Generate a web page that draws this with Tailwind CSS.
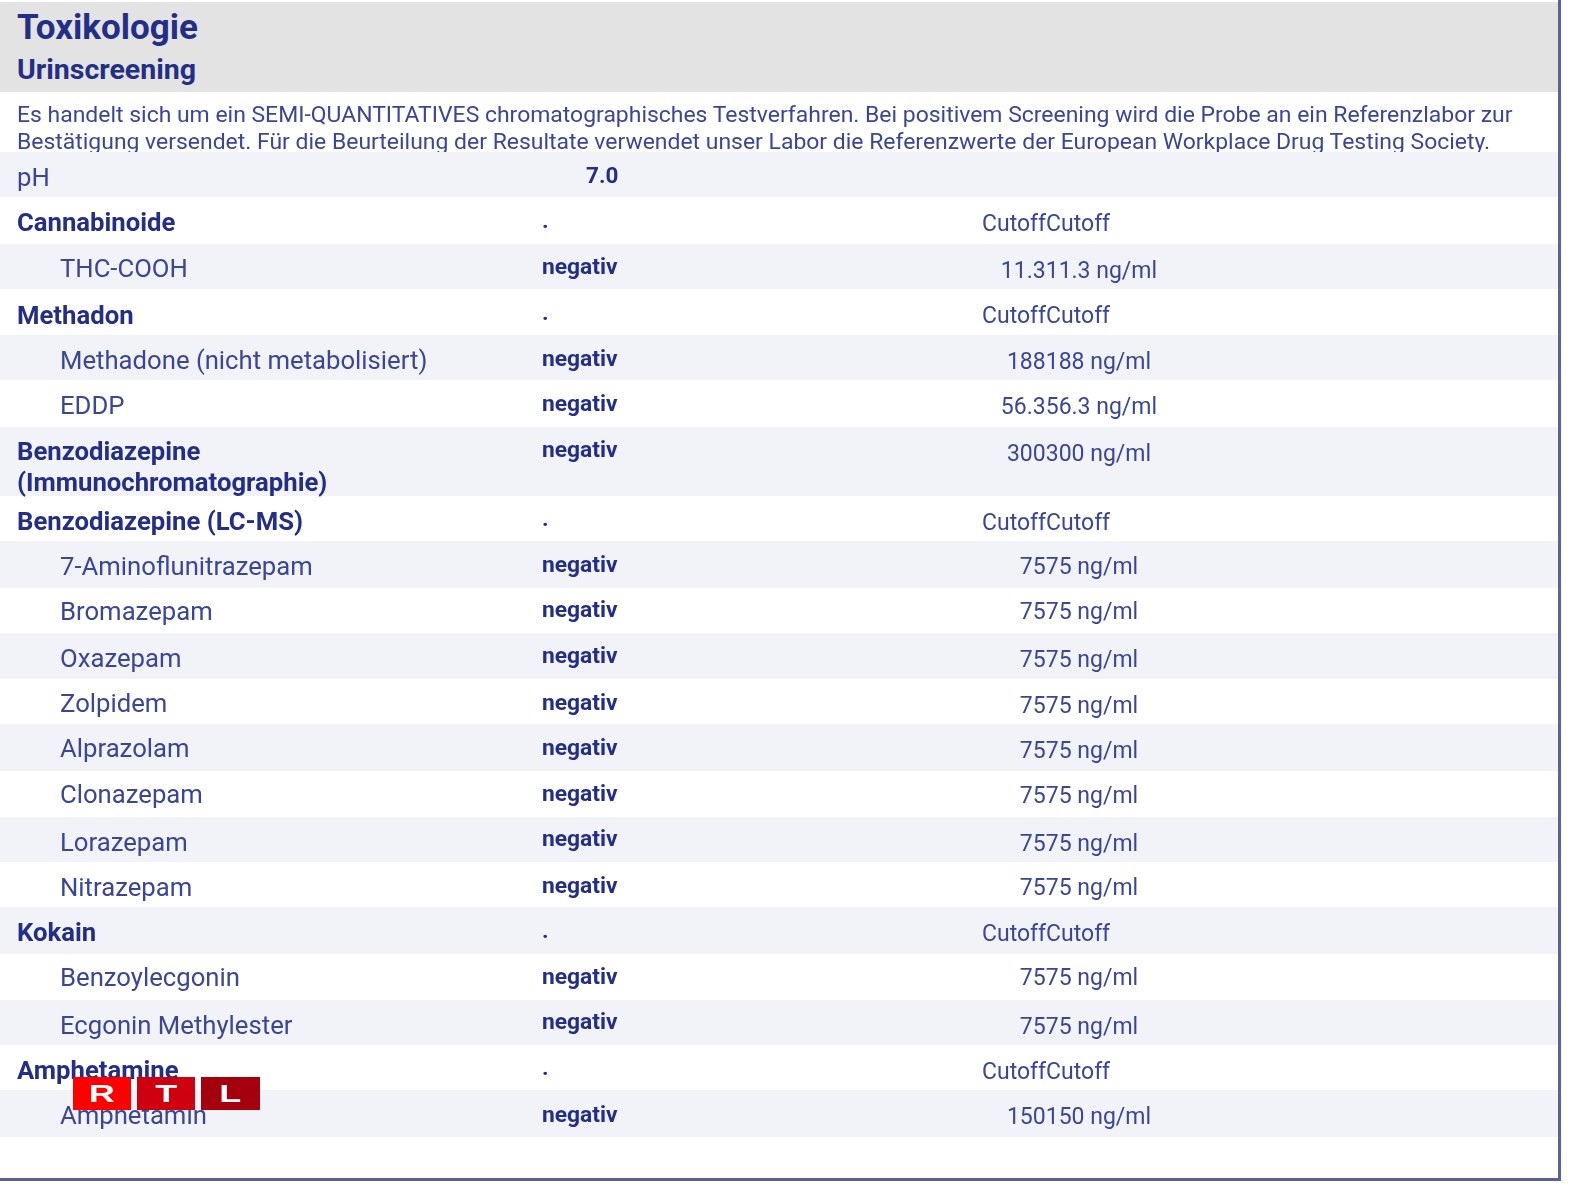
<!DOCTYPE html>
<html lang="de">
<head>
  <meta charset="UTF-8" />
  <title>Toxikologie</title>
  <script src="https://cdn.jsdelivr.net/npm/@tailwindcss/browser@4"></script>
</head>
<body class="bg-white font-['Roboto',sans-serif] text-[#3a4696]">
  <div class="relative h-[1181px] w-[1561px] pt-[2px] border-r-[3px] border-b-[3px] border-[#5a6299] overflow-hidden blur-[0.6px]">
    <!-- Kopf -->
    <div class="h-[90px] bg-[#e3e3e3] pl-[17px] pt-[5px] text-[#232f87] font-bold">
      <h1 class="text-[35px] leading-[42px]">Toxikologie</h1>
      <h2 class="text-[28.5px] leading-[38px] mt-[2px]">Urinscreening</h2>
    </div>

    <!-- Beschreibung -->
    <p class="h-[60px] overflow-hidden pl-[17px] pt-[9px] text-[22.95px] leading-[27px] whitespace-nowrap">Es handelt sich um ein SEMI-QUANTITATIVES chromatographisches Testverfahren. Bei positivem Screening wird die Probe an ein Referenzlabor zur<br>Bestätigung versendet. Für die Beurteilung der Resultate verwendet unser Labor die Referenzwerte der European Workplace Drug Testing Society.</p>

    <!-- Ergebnisse -->
    <div class="text-[25.7px]">
      <div class="grid grid-cols-[542px_440px_1fr] h-[45px] items-center bg-[#f2f3f9]">
        <div class="pl-[17px] pt-[6px]">pH</div><div class="pl-[44px] pt-[2px] text-[22.5px] font-bold text-[#232f87]">7.0</div><div></div>
      </div>
      <div class="grid grid-cols-[542px_440px_1fr] h-[47px] items-center">
        <div class="pl-[17px] pt-[3px] font-bold text-[#232f87]">Cannabinoide</div><div class="pt-[2px] text-[22.8px] font-bold text-[#232f87]">.</div><div class="pt-[7px] text-[23px]">CutoffCutoff</div>
      </div>
      <div class="grid grid-cols-[542px_440px_1fr] h-[45px] items-center bg-[#f2f3f9]">
        <div class="pl-[60px] pt-[3px]">THC-COOH</div><div class="pt-[1px] text-[22.8px] font-bold text-[#232f87]">negativ</div><div class="w-[194px] pt-[10px] text-center text-[23px]">11.311.3 ng/ml</div>
      </div>
      <div class="grid grid-cols-[542px_440px_1fr] h-[46px] items-center">
        <div class="pl-[17px] pt-[6px] font-bold text-[#232f87]">Methadon</div><div class="pt-[2px] text-[22.8px] font-bold text-[#232f87]">.</div><div class="pt-[8px] text-[23px]">CutoffCutoff</div>
      </div>
      <div class="grid grid-cols-[542px_440px_1fr] h-[45px] items-center bg-[#f2f3f9]">
        <div class="pl-[60px] pt-[5px]">Methadone (nicht metabolisiert)</div><div class="pt-[3px] text-[22.8px] font-bold text-[#232f87]">negativ</div><div class="w-[194px] pt-[9px] text-center text-[23px]">188188 ng/ml</div>
      </div>
      <div class="grid grid-cols-[542px_440px_1fr] h-[47px] items-center">
        <div class="pl-[60px] pt-[3px]">EDDP</div><div class="pt-[1px] text-[22.8px] font-bold text-[#232f87]">negativ</div><div class="w-[194px] pt-[7px] text-center text-[23px]">56.356.3 ng/ml</div>
      </div>
      <div class="grid grid-cols-[542px_440px_1fr] h-[69px] items-start pt-[7px] bg-[#f2f3f9]">
        <div class="pl-[17px] pt-[2px] font-bold text-[#232f87] leading-[31px]">Benzodiazepine<br>(Immunochromatographie)</div><div class="text-[22.8px] font-bold text-[#232f87] leading-[32px]">negativ</div><div class="w-[194px] text-center text-[23px] leading-[40px]">300300 ng/ml</div>
      </div>
      <div class="grid grid-cols-[542px_440px_1fr] h-[45px] items-center">
        <div class="pl-[17px] pt-[6px] font-bold text-[#232f87]">Benzodiazepine (LC-MS)</div><div class="pt-[2px] text-[22.8px] font-bold text-[#232f87]">.</div><div class="pt-[10px] text-[23px]">CutoffCutoff</div>
      </div>
      <div class="grid grid-cols-[542px_440px_1fr] h-[47px] items-center bg-[#f2f3f9]">
        <div class="pl-[60px] pt-[3px]">7-Aminoflunitrazepam</div><div class="pt-[1px] text-[22.8px] font-bold text-[#232f87]">negativ</div><div class="w-[194px] pt-[5px] text-center text-[23px]">7575 ng/ml</div>
      </div>
      <div class="grid grid-cols-[542px_440px_1fr] h-[45px] items-center">
        <div class="pl-[60px] pt-[1px]">Bromazepam</div><div class="text-[22.8px] font-bold text-[#232f87]">negativ</div><div class="w-[194px] pt-[3px] text-center text-[23px]">7575 ng/ml</div>
      </div>
      <div class="grid grid-cols-[542px_440px_1fr] h-[46px] items-center bg-[#f2f3f9]">
        <div class="pl-[60px] pt-[5px]">Oxazepam</div><div class="pt-[1px] text-[22.8px] font-bold text-[#232f87]">negativ</div><div class="w-[194px] pt-[9px] text-center text-[23px]">7575 ng/ml</div>
      </div>
      <div class="grid grid-cols-[542px_440px_1fr] h-[45px] items-center">
        <div class="pl-[60px] pt-[3px]">Zolpidem</div><div class="pt-[3px] text-[22.8px] font-bold text-[#232f87]">negativ</div><div class="w-[194px] pt-[9px] text-center text-[23px]">7575 ng/ml</div>
      </div>
      <div class="grid grid-cols-[542px_440px_1fr] h-[47px] items-center bg-[#f2f3f9]">
        <div class="pl-[60px] pt-[1px]">Alprazolam</div><div class="pt-[1px] text-[22.8px] font-bold text-[#232f87]">negativ</div><div class="w-[194px] pt-[7px] text-center text-[23px]">7575 ng/ml</div>
      </div>
      <div class="grid grid-cols-[542px_440px_1fr] h-[46px] items-center">
        <div class="pl-[60px]">Clonazepam</div><div class="text-[22.8px] font-bold text-[#232f87]">negativ</div><div class="w-[194px] pt-[4px] text-center text-[23px]">7575 ng/ml</div>
      </div>
      <div class="grid grid-cols-[542px_440px_1fr] h-[45px] items-center bg-[#f2f3f9]">
        <div class="pl-[60px] pt-[5px]">Lorazepam</div><div class="text-[22.8px] font-bold text-[#232f87]">negativ</div><div class="w-[194px] pt-[9px] text-center text-[23px]">7575 ng/ml</div>
      </div>
      <div class="grid grid-cols-[542px_440px_1fr] h-[45px] items-center">
        <div class="pl-[60px] pt-[5px]">Nitrazepam</div><div class="pt-[3px] text-[22.8px] font-bold text-[#232f87]">negativ</div><div class="w-[194px] pt-[7px] text-center text-[23px]">7575 ng/ml</div>
      </div>
      <div class="grid grid-cols-[542px_440px_1fr] h-[47px] items-center bg-[#f2f3f9]">
        <div class="pl-[17px] pt-[3px] font-bold text-[#232f87]">Kokain</div><div class="pt-[2px] text-[22.8px] font-bold text-[#232f87]">.</div><div class="pt-[7px] text-[23px]">CutoffCutoff</div>
      </div>
      <div class="grid grid-cols-[542px_440px_1fr] h-[46px] items-center">
        <div class="pl-[60px] pt-[1px]">Benzoylecgonin</div><div class="pt-[1px] text-[22.8px] font-bold text-[#232f87]">negativ</div><div class="w-[194px] pt-[2px] text-center text-[23px]">7575 ng/ml</div>
      </div>
      <div class="grid grid-cols-[542px_440px_1fr] h-[45px] items-center bg-[#f2f3f9]">
        <div class="pl-[60px] pt-[6px]">Ecgonin Methylester</div><div class="text-[22.8px] font-bold text-[#232f87]">negativ</div><div class="w-[194px] pt-[9px] text-center text-[23px]">7575 ng/ml</div>
      </div>
      <div class="grid grid-cols-[542px_440px_1fr] h-[45px] items-center">
        <div class="pl-[17px] pt-[5px] font-bold text-[#232f87]">Amphetamine</div><div class="pt-[2px] text-[22.8px] font-bold text-[#232f87]">.</div><div class="pt-[9px] text-[23px]">CutoffCutoff</div>
      </div>
      <div class="grid grid-cols-[542px_440px_1fr] h-[47px] items-center bg-[#f2f3f9]">
        <div class="pl-[60px] pt-[3px]">Amphetamin</div><div class="pt-[3px] text-[22.8px] font-bold text-[#232f87]">negativ</div><div class="w-[194px] pt-[7px] text-center text-[23px]">150150 ng/ml</div>
      </div>
    </div>
  </div>

  <!-- Senderlogo -->
  <div class="absolute left-[73px] top-[1077px] flex gap-[6px] font-['Liberation_Sans',sans-serif] text-[24px] font-bold leading-[33px] text-white">
    <div class="h-[33px] w-[58px] bg-[#ff0000] text-center"><span class="inline-block scale-x-150">R</span></div>
    <div class="h-[33px] w-[58px] bg-[#cf0010] text-center"><span class="inline-block scale-x-150">T</span></div>
    <div class="h-[33px] w-[59px] bg-[#a4000e] text-center"><span class="inline-block scale-x-150">L</span></div>
  </div>
</body>
</html>
